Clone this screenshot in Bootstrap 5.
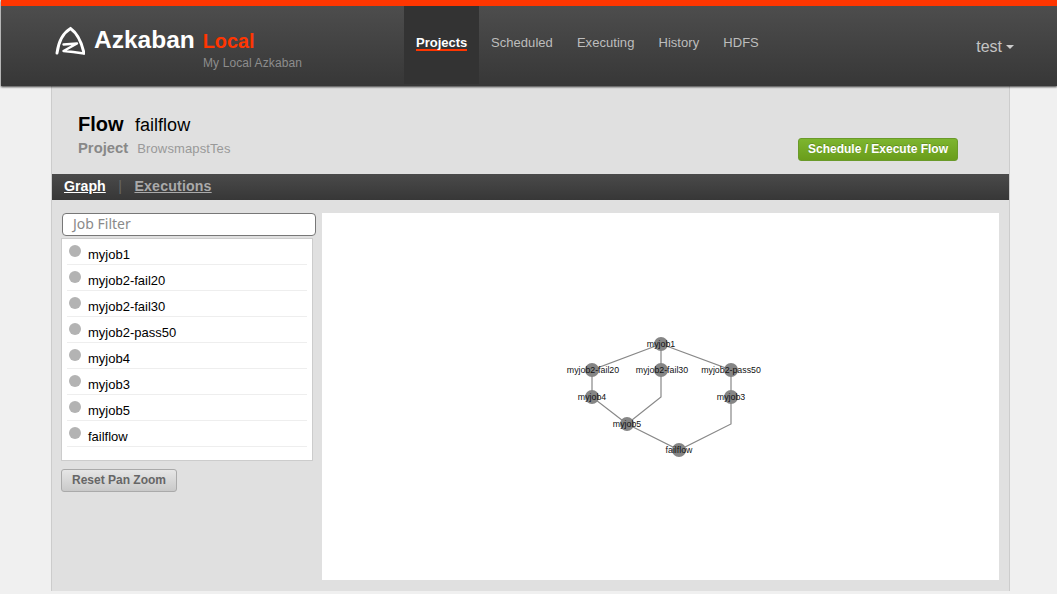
<!DOCTYPE html>
<html lang="en"><head><meta charset="utf-8"><title>Azkaban</title>
<link href="https://cdn.jsdelivr.net/npm/bootstrap@5.3.0/dist/css/bootstrap.min.css" rel="stylesheet">
<style>
html,body{height:594px;overflow:hidden}
body{background:#f0f0f0;font-family:"Liberation Sans",Arial,sans-serif;color:#000}
.az-top{height:86px;margin-left:1px;border-top:6px solid #ff3601;background:linear-gradient(#4d4d4d,#373737);box-shadow:0 1px 2px rgba(0,0,0,.75);position:relative;z-index:2;padding-left:53px}
.az-brand{width:350px;padding-top:17px}
.az-logo{display:block;margin-right:9px}
.az-name{font-size:24.500px;font-weight:700;color:#fff;line-height:34px}
.az-env{font-size:19.800px;font-weight:700;color:#ff3601;line-height:34px;margin-left:8px;position:relative;top:1px}
.az-sub{font-size:12px;color:#8d8d8d;margin-left:149px;line-height:14px;letter-spacing:.1px;margin-top:-1px}
.az-nav{height:78px;list-style:none;margin:0;padding:0}
.az-nav li{padding:30px 12px 0;font-size:13px;line-height:14px;color:#bdbdbd;letter-spacing:.05px}
.az-nav li.on{background:#333;font-weight:700;color:#fff;width:75px;letter-spacing:0}
.az-nav li.on span{display:block;border-bottom:2px solid #ff3601;line-height:13px;height:15px}
.az-user{margin-left:auto;margin-right:43px;margin-top:32px;font-size:16px;line-height:18px;color:#c4c4c4}
.az-caret{display:inline-block;border:4px solid transparent;border-top-color:#ccc;border-bottom:0;margin-left:4px;vertical-align:3px}
.az-wrap{width:959px;margin-left:51px;height:505px;background:#e0e0e0;border-left:1px solid #ccc;border-right:1px solid #ccc}
.az-head{height:88px;padding:26px 51px 0 26px;position:relative}
.az-h1{font-size:20px;font-weight:700;line-height:24px}
.az-h1 span{font-size:18px;font-weight:400;margin-left:6px}
.az-h2{font-size:14.800px;font-weight:700;color:#888;line-height:18px;margin-top:2px}
.az-h2 span{font-size:13px;font-weight:400;color:#999;margin-left:5px;letter-spacing:.12px}
.az-go{background:linear-gradient(#7db52f,#6a9d1b);border:1px solid #6a9a2a;border-radius:3px;color:#fff;font-size:12px;font-weight:700;line-height:21px;padding:0;height:23px;width:160px;white-space:nowrap;position:absolute;top:52px;right:51px;text-shadow:0 -1px 0 rgba(0,0,0,.2)}
.az-tabs{height:26px;background:linear-gradient(#4a4a4a,#373737);padding-left:12px;font-size:14.200px;font-weight:700;line-height:24px;color:#666}
.az-tabs u{color:#fff}.az-tabs u.off{color:#aaa;letter-spacing:.15px}
.az-tabs i{font-style:normal;font-weight:400;margin:0 12.500px}
.az-main{padding:13px 10px 0 9px;gap:9px}
.az-side{width:252px;flex:none}
.az-filter{width:254px;height:23px;margin-left:1px;border:1px solid #777;border-radius:4px;background:#fff;font-family:"Noto Sans",sans-serif;font-size:14px;line-height:20px;color:#8a8a8a;padding-left:10px}
.az-list{width:252px;height:223px;background:#fff;border:1px solid #ccc;margin-top:2px;padding:0 5px;list-style:none;margin-bottom:7px}
.az-list li{height:26px;border-bottom:1px solid #eee;font-size:13px;line-height:32px;padding-left:21px;position:relative}
.az-dot{position:absolute;left:2px;top:6px;width:12px;height:12px;border-radius:50%;background:#b3b3b3}
.az-reset{width:116px;height:23px;padding:0;background:linear-gradient(#e6e6e6,#c9c9c9);border:1px solid #aaa;border-radius:3px;font-size:12px;font-weight:700;color:#666;line-height:21px}
.az-graph{width:677px;height:367px;background:#fff;flex:none}
.az-graph text{font-family:"Liberation Sans",Arial,sans-serif;font-size:8.800px;text-anchor:middle;fill:#111}
.az-graph .e{fill:none;stroke:#888;stroke-width:1.2}
.az-graph circle{fill:#858585}
</style></head><body>
<header class="az-top d-flex">
  <div class="az-brand">
    <div class="d-flex align-items-center">
      <svg class="az-logo" width="31" height="30" viewBox="54 22 31 30"><path d="M57 50C58.500 39 63 30 70.500 25.500C77 30 81.500 39 84 50" fill="none" stroke="#fff" stroke-width="2.900" stroke-linecap="round"/><path d="M63.500 41.500L77 40.500L63.500 48C71 48.500 78 49.500 84 50.500" fill="none" stroke="#fff" stroke-width="2.400" stroke-linejoin="round" stroke-linecap="round"/></svg>
      <span class="az-name">Azkaban</span><span class="az-env">Local</span>
    </div>
    <div class="az-sub">My Local Azkaban</div>
  </div>
  <ul class="az-nav d-flex">
    <li class="on"><span>Projects</span></li><li>Scheduled</li><li>Executing</li><li>History</li><li>HDFS</li>
  </ul>
  <div class="az-user">test<span class="az-caret"></span></div>
</header>
<main class="az-wrap">
  <section class="az-head">
    <div class="az-h1">Flow <span>failflow</span></div>
    <div class="az-h2">Project <span>BrowsmapstTes</span></div>
    <button class="btn az-go">Schedule / Execute Flow</button>
  </section>
  <nav class="az-tabs"><u>Graph</u><i>|</i><u class="off">Executions</u></nav>
  <div class="az-main d-flex">
    <div class="az-side">
      <div class="az-filter">Job Filter</div>
      <ul class="az-list">
        <li><span class="az-dot"></span>myjob1</li>
        <li><span class="az-dot"></span>myjob2-fail20</li>
        <li><span class="az-dot"></span>myjob2-fail30</li>
        <li><span class="az-dot"></span>myjob2-pass50</li>
        <li><span class="az-dot"></span>myjob4</li>
        <li><span class="az-dot"></span>myjob3</li>
        <li><span class="az-dot"></span>myjob5</li>
        <li><span class="az-dot"></span>failflow</li>
      </ul>
      <button class="btn az-reset">Reset Pan Zoom</button>
    </div>
    <svg class="az-graph" viewBox="322 213 677 367">
      <path class="e" d="M661 344L592 370V397L627 424L661 397V344M661 344L731 370V397V424L679 450L627 424"/>
      <g>
      <circle cx="661" cy="344" r="7"/><circle cx="592" cy="370" r="7"/><circle cx="661" cy="370" r="7"/><circle cx="731" cy="370" r="7"/><circle cx="592" cy="397" r="7"/><circle cx="731" cy="397" r="7"/><circle cx="627" cy="424" r="7"/><circle cx="679" cy="450" r="7"/>
      </g>
      <text x="661" y="347">myjob1</text><text x="593" y="373">myjob2-fail20</text><text x="662" y="373">myjob2-fail30</text><text x="731" y="373">myjob2-pass50</text><text x="592" y="400">myjob4</text><text x="731" y="400">myjob3</text><text x="627" y="427">myjob5</text><text x="679" y="453">failflow</text>
    </svg>
  </div>
</main>
<script src="https://cdn.jsdelivr.net/npm/bootstrap@5.3.0/dist/js/bootstrap.bundle.min.js"></script>
</body></html>
